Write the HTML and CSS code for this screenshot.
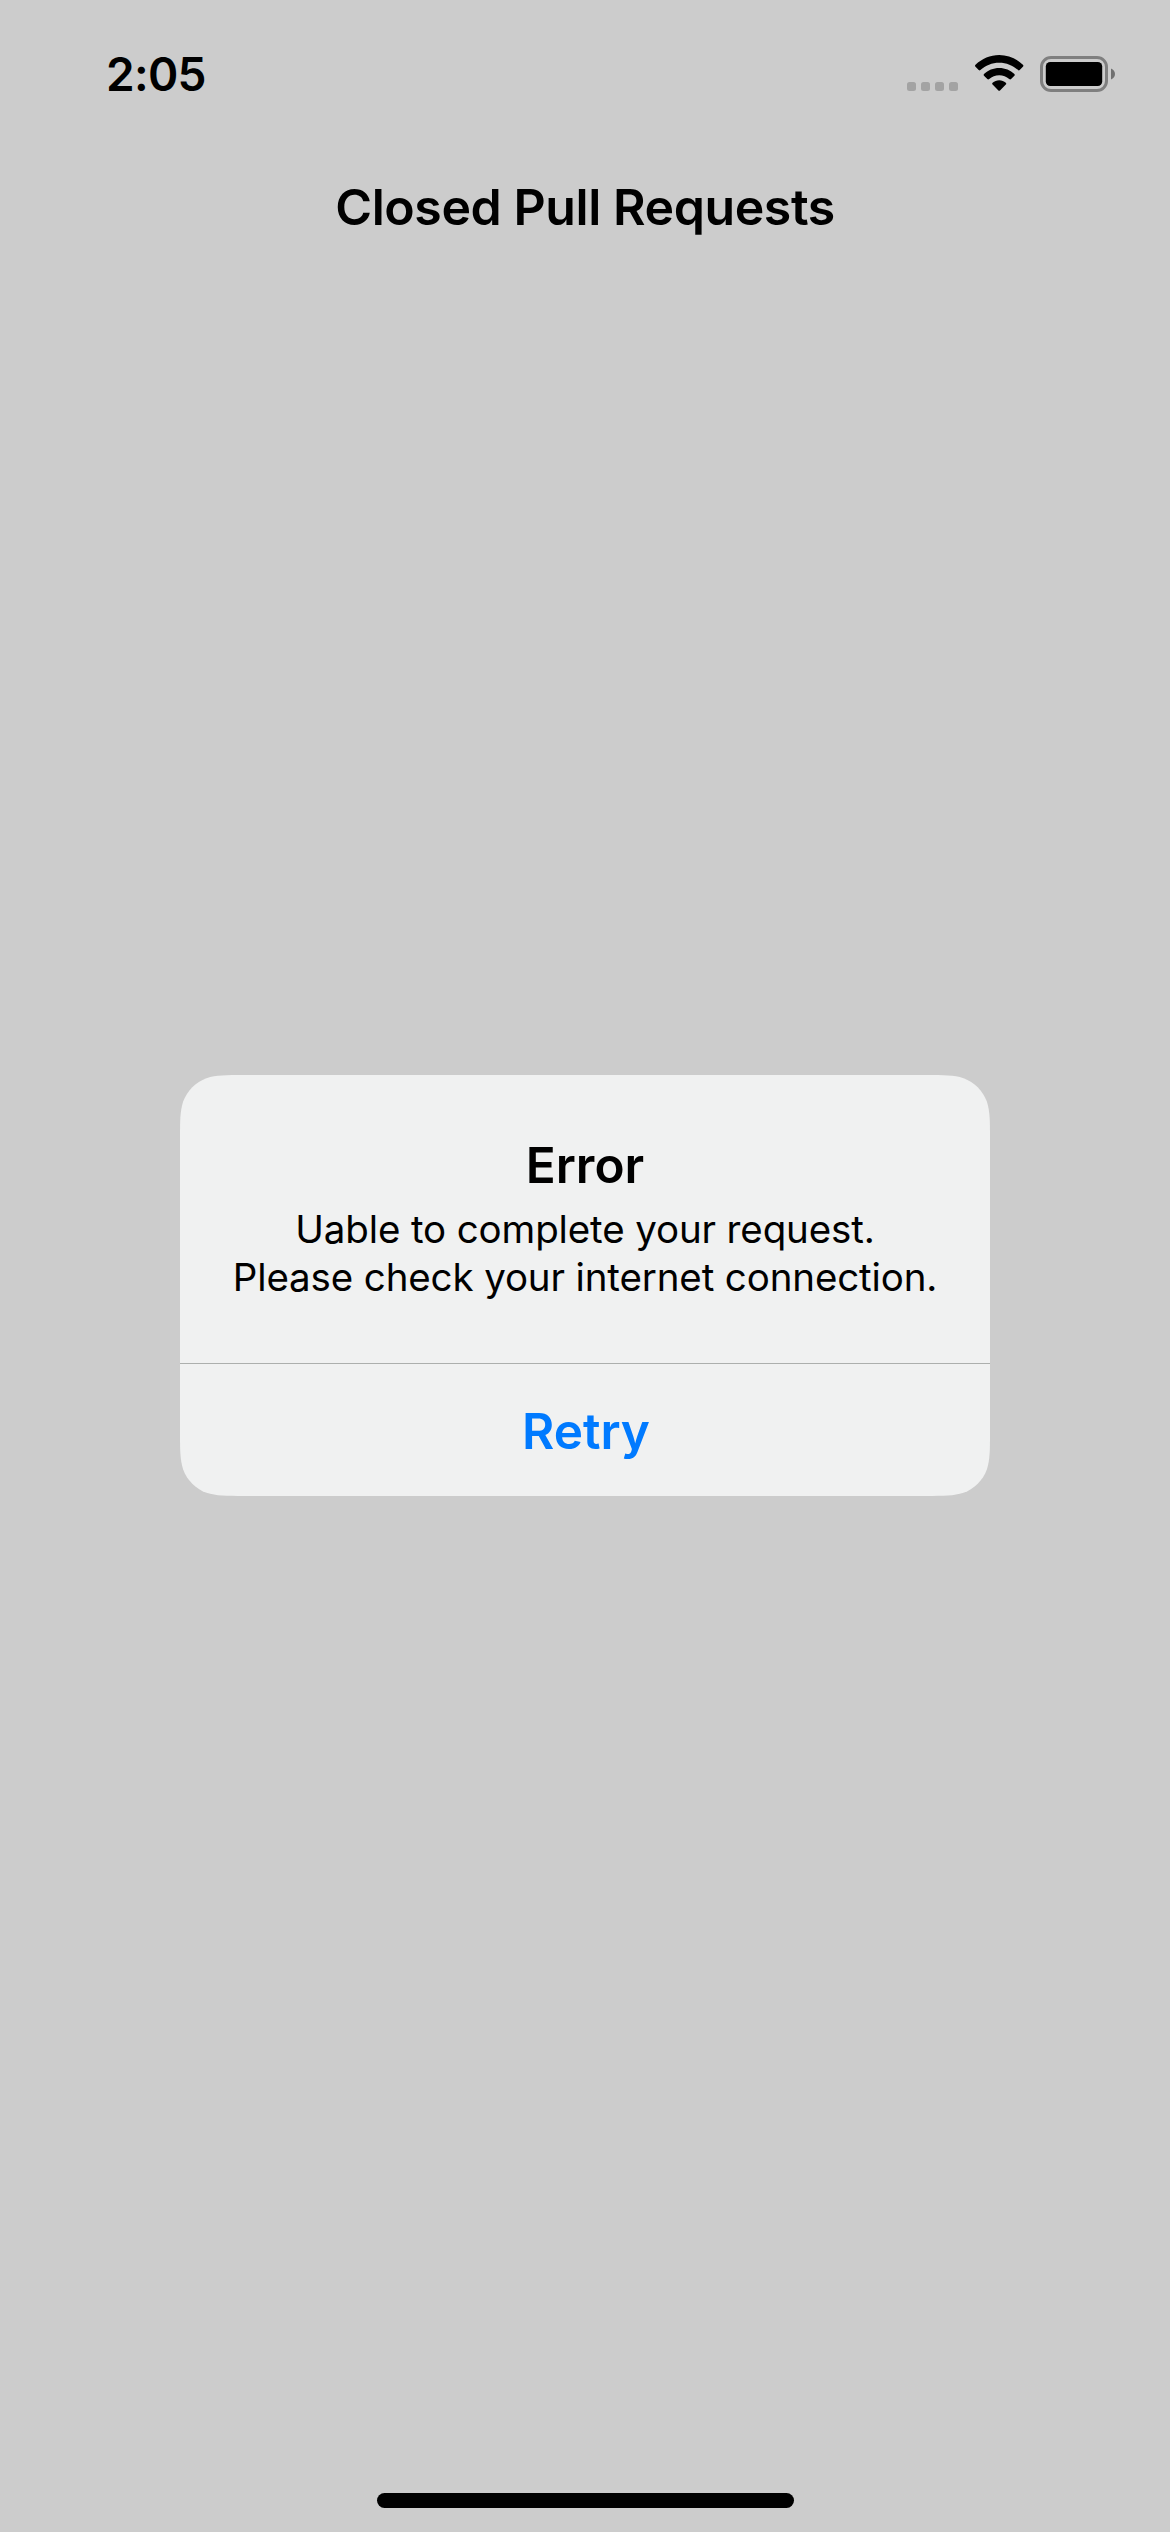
FILE: index.html
```html
<!DOCTYPE html>
<html lang="en">
<head>
<meta charset="utf-8">
<title>Closed Pull Requests</title>
<link rel="stylesheet" href="styles.css">
</head>
<body>
<div class="screen">
  <header class="status-bar">
    <time class="clock">2:05</time>
    <div class="indicators">
      <div class="signal"><i></i><i></i><i></i><i></i></div>
      <svg class="wifi" width="49" height="36" viewBox="0 0 49 36">
        <path d="M.5 9.8C7 3.600 15.300 0 24.200 0S41.400 3.600 47.900 9.800Q48.900 10.700 47.900 11.700L44.700 15Q43.900 15.800 43 15C37.900 10.400 31.300 7.700 24.200 7.700S10.500 10.400 5.400 15Q4.500 15.800 3.700 15L.5 11.700Q-.5 10.700 .5 9.800Z"/>
        <path d="M9 18.900C13 15.200 18.300 12.900 24.200 12.900S35.400 15.200 39.400 18.900Q40.300 19.800 39.400 20.700L36.100 24Q35.200 24.800 34.200 24C31.500 21.700 28 20.300 24.200 20.300S16.900 21.700 14.200 24Q13.200 24.800 12.300 24L9 20.700Q8.100 19.800 9 18.900Z"/>
        <path d="M17.600 27.800C19.400 26.300 21.700 25.300 24.200 25.300S29 26.300 30.800 27.800Q31.700 28.600 30.800 29.500L25 35.400Q24.200 36.200 23.400 35.400L17.600 29.500Q16.700 28.600 17.600 27.800Z"/>
      </svg>
      <svg class="battery" width="75" height="36" viewBox="0 0 75 36">
        <rect x="1.500" y="1.500" width="65" height="33" rx="9.500" fill="none" stroke="#7f7f7f" stroke-width="3"/>
        <rect x="5.800" y="6" width="56.400" height="24" rx="4.500"/>
        <path d="M71 12.500C73.500 13.400 75 15.500 75 18S73.500 22.600 71 23.500Z" fill="#707070"/>
      </svg>
    </div>
  </header>
  <nav class="nav-bar"><h1>Closed Pull Requests</h1></nav>
  <main class="content">
    <section class="alert" role="alertdialog">
      <div class="alert-body">
        <h2>Error</h2>
        <p>Uable to complete your request.<br>Please check your internet connection.</p>
      </div>
      <button class="retry">Retry</button>
    </section>
  </main>
  <div class="home-indicator"></div>
</div>
</body>
</html>
```

FILE: styles.css
```css
* { box-sizing: border-box; }

body {
  margin: 0;
  background: #ccc;
  color: #000;
  font-family: Inter, "Liberation Sans", sans-serif;
}

h1, h2, p { margin: 0; }

.screen {
  display: flex;
  flex-direction: column;
  align-items: center;
  width: 1170px;
  height: 2532px;
  padding-bottom: 24px;
}

.status-bar {
  display: flex;
  justify-content: space-between;
  width: 100%;
  height: 141px;
  padding: 44px 55px 0 106px;
}

.clock {
  font-size: 46px;
  font-weight: 600;
  line-height: 60px;
  letter-spacing: -.7px;
}

.indicators {
  display: flex;
  align-items: flex-start;
  padding-top: 11px;
}

.signal {
  display: flex;
  gap: 5px;
  margin: 27px 17px 0 0;
}

.signal i {
  width: 9px;
  height: 9px;
  border-radius: 2.5px;
  background: #a3a3a3;
}

.wifi { margin-right: 16px; }
.battery { margin-top: 1px; }

.nav-bar {
  display: flex;
  align-items: center;
  height: 132px;
}

.nav-bar h1 {
  font-size: 50px;
  font-weight: 600;
  line-height: 60px;
  letter-spacing: -.42px;
}

.content {
  flex: 1;
  padding-top: 802px;
}

.alert {
  width: 810px;
  height: 421px;
  background: #f0f1f1;
  text-align: center;
  clip-path: path("M64.2 0H745.8C764.3 0 773.5 0 783.5 3.150C794.300 7.100 802.900 15.700 806.850 26.500C810 36.500 810 45.700 810 64.200V356.800C810 375.300 810 384.500 806.850 394.500C802.900 405.300 794.300 413.900 783.500 417.850C773.500 421 764.300 421 745.800 421H64.200C45.700 421 36.500 421 26.500 417.850C15.700 413.900 7.100 405.300 3.150 394.500C0 384.500 0 375.300 0 356.800V64.200C0 45.700 0 36.500 3.150 26.500C7.100 15.700 15.700 7.100 26.500 3.150C36.500 0 45.700 0 64.200 0Z");
}

.alert-body {
  height: 289px;
  padding-top: 60px;
  border-bottom: 1px solid #acafad;
}

.alert h2 {
  margin-bottom: 10px;
  font-size: 49.5px;
  font-weight: 600;
  line-height: 60px;
}

.alert p {
  font-size: 38.5px;
  line-height: 48px;
  letter-spacing: -.13px;
  white-space: nowrap;
}

.retry {
  display: block;
  width: 100%;
  height: 132px;
  padding: 2px 0 0 2px;
  border: 0;
  background: none;
  color: #007aff;
  font: 600 49.5px/60px Inter, "Liberation Sans", sans-serif;
}

.home-indicator {
  width: 417px;
  height: 15px;
  border-radius: 8px;
  background: #000;
}
```
